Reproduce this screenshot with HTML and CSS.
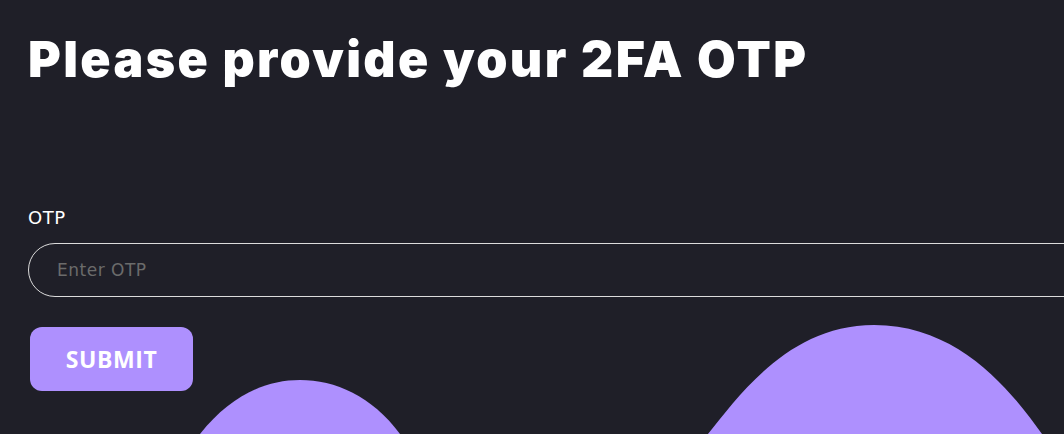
FILE: index.html
```html
<!DOCTYPE html>
<html lang="en">
<head>
<meta charset="utf-8">
<title>2FA OTP</title>
<link rel="stylesheet" href="styles.css">
</head>
<body>
<main class="page">
  <h1 class="title">Please provide your 2FA OTP</h1>
  <form class="otp-form">
    <label class="field-label" for="otp">OTP</label>
    <input class="field-input" id="otp" type="text" placeholder="Enter OTP">
    <button class="submit-btn" type="button">SUBMIT</button>
  </form>
  <svg class="blob blob-left" width="240" height="60" viewBox="0 0 240 60" aria-hidden="true">
    <path d="M20 58 C 50 20, 85 4, 120 4 C 155 4, 192 20, 220 58 L 220 60 L 20 60 Z" fill="#ae90fe"/>
  </svg>
  <svg class="blob blob-right" width="380" height="115" viewBox="0 0 380 115" aria-hidden="true">
    <path d="M18 115 C 50 75, 100 6, 184 6 C 268 6, 320 70, 352 115 Z" fill="#ae90fe"/>
  </svg>
</main>
</body>
</html>
```
FILE: styles.css
```css
html, body {
  margin: 0;
  padding: 0;
  background: #1f1f28;
  height: 100%;
  overflow: hidden;
}
.page {
  position: relative;
  height: 434px;
  padding: 0 0 0 28px;
  box-sizing: border-box;
  overflow: hidden;
}
.title {
  margin: 0;
  padding-top: 24px;
  font-family: "Inter", sans-serif;
  font-weight: 900;
  font-size: 50px;
  line-height: 70px;
  color: #ffffff;
  letter-spacing: 2.35px;
  white-space: nowrap;
}
.otp-form {
  display: flex;
  flex-direction: column;
  align-items: flex-start;
  margin-top: 113px;
}
.field-label {
  font-family: "DejaVu Sans", sans-serif;
  font-size: 18px;
  letter-spacing: 0.6px;
  color: #ffffff;
  line-height: 21px;
}
.field-input {
  margin-top: 15px;
  width: 1100px;
  height: 54px;
  box-sizing: border-box;
  border: 1px solid #dcdcdc;
  border-radius: 27px;
  background: transparent;
  padding: 0 28px;
  font-family: "DejaVu Sans", sans-serif;
  font-size: 17px;
  letter-spacing: 0.5px;
  color: #ffffff;
  outline: none;
}
.field-input::placeholder {
  color: #6b6b6b;
}
.submit-btn {
  margin: 30px 0 0 2px;
  width: 163px;
  height: 64px;
  border: none;
  border-radius: 12px;
  background: #ae90fe;
  color: #ffffff;
  font-family: "Open Sans", sans-serif;
  font-weight: 700;
  font-size: 23px;
  letter-spacing: 0.6px;
  cursor: pointer;
}
.blob {
  position: absolute;
  display: block;
}
.blob-left {
  left: 180px;
  top: 376px;
}
.blob-right {
  left: 690px;
  top: 319px;
}
```
